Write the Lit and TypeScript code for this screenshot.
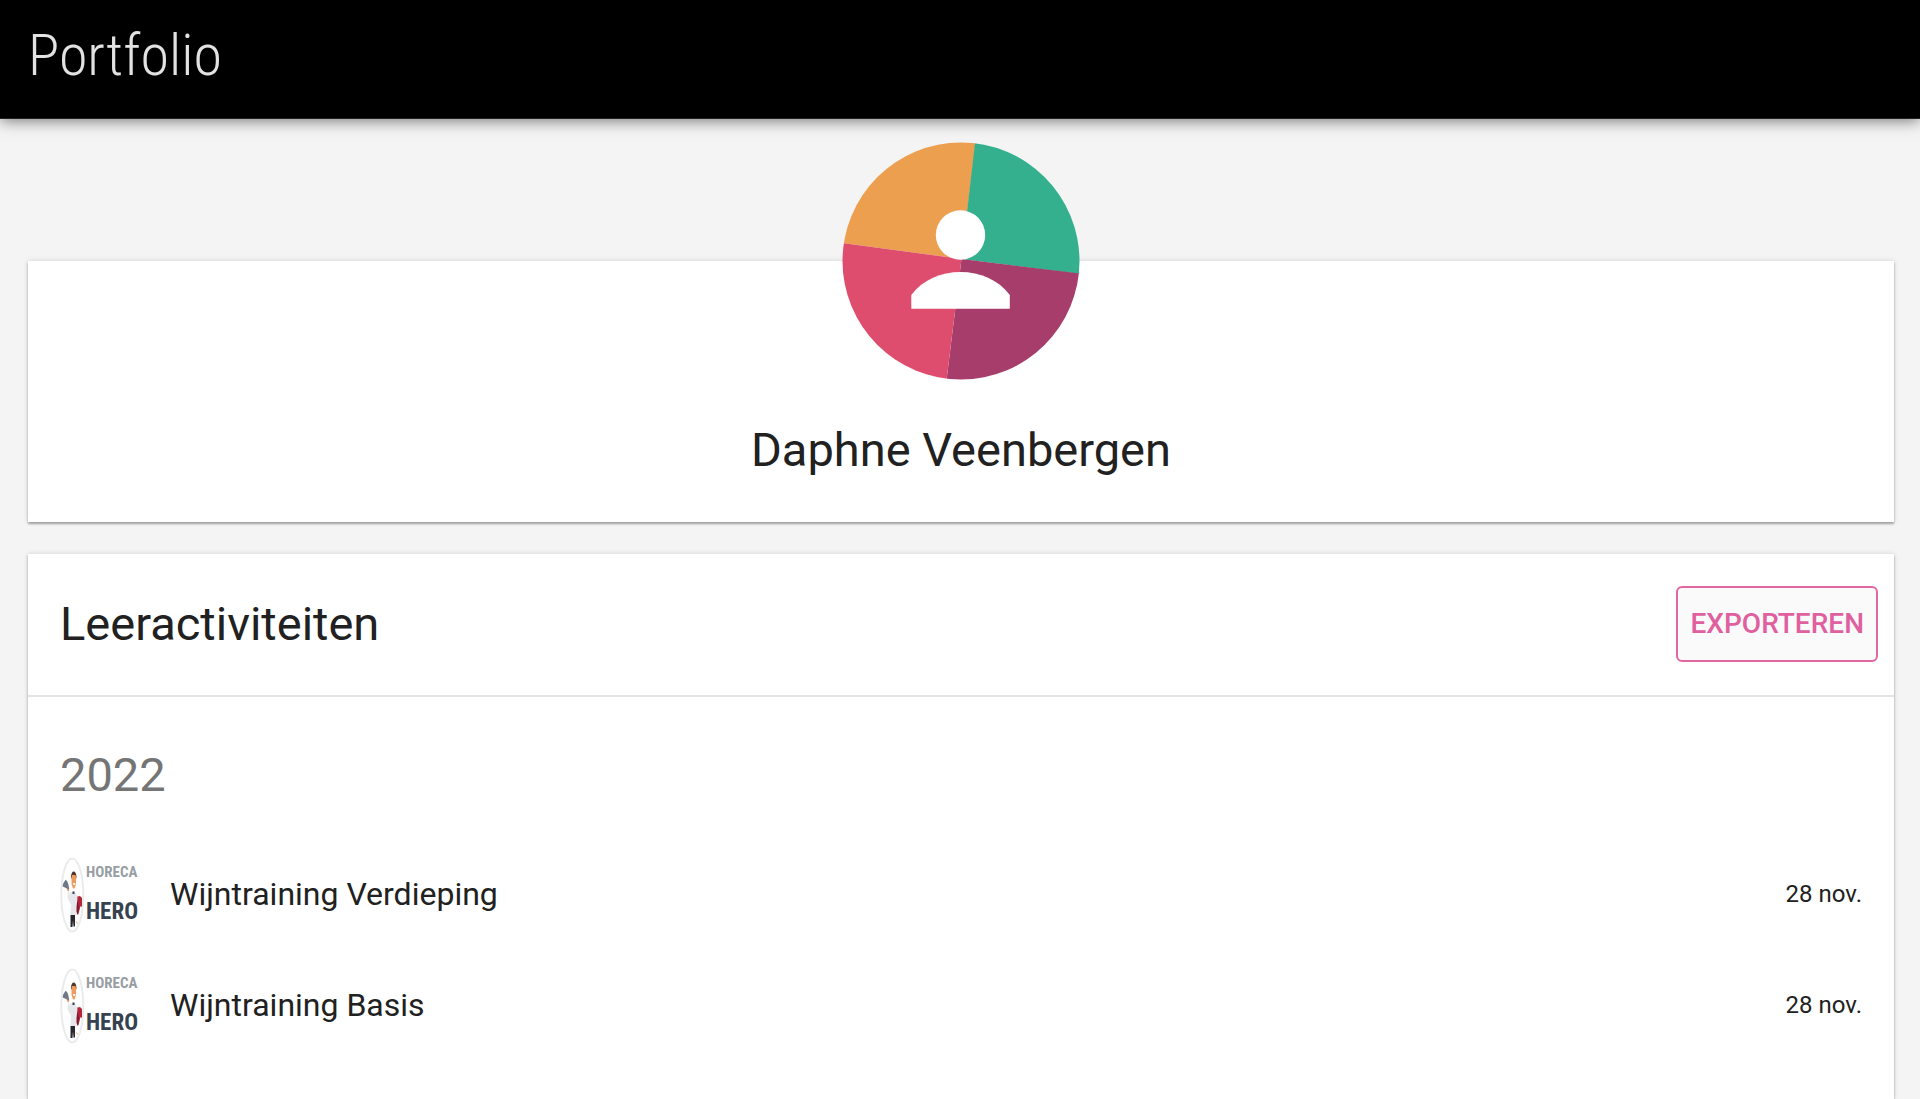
import { LitElement, html, css } from "lit";
import { customElement, property } from "lit/decorators.js";

interface Activity {
  title: string;
  date: string;
}

const activities: Activity[] = [
  { title: "Wijntraining Verdieping", date: "28 nov." },
  { title: "Wijntraining Basis", date: "28 nov." },
];

@customElement("profile-avatar")
class ProfileAvatar extends LitElement {
  static styles = css`
    :host {
      display: block;
    }
    .picture {
      display: block;
      width: 238px;
      height: 238px;
    }
  `;

  render() {
    return html`
      <svg class="picture" viewBox="0 0 238 238" role="img" aria-label="Profielfoto">
        <defs>
          <clipPath id="disc"><circle cx="119" cy="119" r="118.5" /></clipPath>
        </defs>
        <g clip-path="url(#disc)">
          <path fill="#ed9f50" d="M0 0H133.6L119.5 117L0 101Z" />
          <path fill="#34b08f" d="M133.1 0H238V132L119.5 117Z" />
          <path fill="#a63d6b" d="M119.5 117L238 131.5V238H104.5Z" />
          <path fill="#df4d6e" d="M0 101L119.5 117L104.5 238H0Z" />
        </g>
        <circle cx="118.5" cy="93" r="24.7" fill="#fff" />
        <path fill="#fff" d="M69.3 153C81 137.5 99 130 118.5 130C138 130 156 137.5 167.8 153V166.7H69.3Z" />
      </svg>
    `;
  }
}

@customElement("horeca-logo")
class HorecaLogo extends LitElement {
  static styles = css`
    :host {
      display: block;
    }
    .logo {
      display: block;
      width: 79px;
      height: 78px;
    }
    .brand {
      font-family: "Roboto Condensed", Roboto, sans-serif;
      font-weight: 700;
    }
    .top {
      font-size: 15px;
      fill: #979ea4;
    }
    .bottom {
      font-size: 23px;
      fill: #36424f;
    }
  `;

  render() {
    return html`
      <svg class="logo" viewBox="0 -2 79 78" role="img" aria-label="Horeca Hero">
        <ellipse cx="12.3" cy="38" rx="11" ry="36.5" fill="#fff" stroke="#e9ebed" stroke-width="2" />
        <path fill="#b3253b" d="M15.5 40L20 39L22 41V50L20.5 49L19.5 53L18 58L15.5 54Z" />
        <path fill="#7d1b30" d="M17 43L19 50L18 58L16 53Z" />
        <path fill="#e6e7ea" d="M10.5 35.5L13 34.5L16 36L17.5 41L16.5 50V58H10.5L11 48L7.5 41L8 32L9 33L9.5 38Z" />
        <path fill="#f19a5b" d="M11.5 17.5H16V27L14.5 31.5H13L11.5 27Z" />
        <path fill="#fff" d="M13 26H15.5L15 28H13.5Z" />
        <path fill="#50352b" d="M11 20C11 12.5 16.5 12.5 16.5 20V22L15.5 18H12L11.5 22Z" />
        <path fill="#f19a5b" d="M6.5 31H9V34H7.5Z" />
        <path fill="#707885" d="M2.7 29.5C3 25.5 4.5 25 5.5 22.7C8 24 8.5 27.5 9.3 32.5Z" />
        <path fill="#26282d" d="M10.5 58H15V69.5H13.5L13 63.5L12.5 70H10.5Z" />
        <path fill="#36424f" d="M12.5 34.5H14.5V37H12.5Z" />
        <path fill="#f3b78f" d="M15.5 63L18 66L17 67Z" />
        <text class="brand top" x="26" y="20">HORECA</text>
        <text class="brand bottom" x="26" y="62">HERO</text>
      </svg>
    `;
  }
}

@customElement("activity-row")
class ActivityRow extends LitElement {
  @property() heading = "";
  @property() date = "";

  static styles = css`
    :host {
      display: flex;
      align-items: center;
      height: 78px;
      gap: 31px;
    }
    .title {
      flex: 1;
      font-size: 32px;
      line-height: 40px;
    }
    .date {
      font-size: 24px;
      line-height: 32px;
    }
  `;

  render() {
    return html`
      <horeca-logo></horeca-logo>
      <span class="title">${this.heading}</span>
      <span class="date">${this.date}</span>
    `;
  }
}

@customElement("app-root")
class AppRoot extends LitElement {
  static styles = css`
    :host {
      display: flex;
      flex-direction: column;
      box-sizing: border-box;
      min-height: 100vh;
      background: #f4f4f4;
      color: #212121;
      font-family: Roboto, sans-serif;
    }
    .bar {
      padding: 19px 28px 27px;
      background: #000;
      border-bottom: 1px solid #222;
      box-shadow: 0 2px 14px rgba(0, 0, 0, 0.5);
      color: #e2e2e2;
    }
    .page-title {
      margin: 0;
      font-family: "Roboto Condensed", Roboto, sans-serif;
      font-size: 58px;
      font-weight: 300;
      line-height: 72px;
    }
    .content {
      flex: 1;
      display: flex;
      flex-direction: column;
      gap: 32px;
      padding: 142px 26px 0 28px;
    }
    .card {
      background: #fff;
      box-shadow: 0 2px 2px rgba(0, 0, 0, 0.3), 0 0 5px rgba(0, 0, 0, 0.14);
    }
    .profile {
      display: flex;
      flex-direction: column;
      align-items: center;
      gap: 38px;
      padding-bottom: 40px;
    }
    .avatar {
      margin-top: -119px;
    }
    .heading {
      margin: 0;
      font-size: 47px;
      font-weight: 400;
      line-height: 64px;
    }
    .activities {
      flex: 1;
    }
    .toolbar {
      display: flex;
      align-items: center;
      justify-content: space-between;
      padding: 32px 16px 33px 32px;
      border-bottom: 2px solid #e4e4e4;
    }
    .export {
      padding: 0 12px;
      border: 2px solid #e166a4;
      border-radius: 6px;
      background: #fafafa;
      color: #e0609f;
      font: 500 28px/72px Roboto, sans-serif;
      text-transform: uppercase;
      cursor: pointer;
    }
    .year {
      margin: 0;
      padding: 46px 32px 48px;
      color: #757575;
      font-size: 47px;
      font-weight: 400;
      line-height: 64px;
    }
    .list {
      display: flex;
      flex-direction: column;
      gap: 33px;
      margin: 0;
      padding: 0 32px 32px;
      list-style: none;
    }
  `;

  render() {
    return html`
      <header class="bar"><h1 class="page-title">Portfolio</h1></header>
      <main class="content">
        <section class="card profile">
          <profile-avatar class="avatar"></profile-avatar>
          <h2 class="heading">Daphne Veenbergen</h2>
        </section>
        <section class="card activities">
          <div class="toolbar">
            <h2 class="heading">Leeractiviteiten</h2>
            <button class="export" type="button">Exporteren</button>
          </div>
          <h3 class="year">2022</h3>
          <ul class="list">
            ${activities.map(
              (item) => html`<li><activity-row .heading=${item.title} .date=${item.date}></activity-row></li>`
            )}
          </ul>
        </section>
      </main>
    `;
  }
}
